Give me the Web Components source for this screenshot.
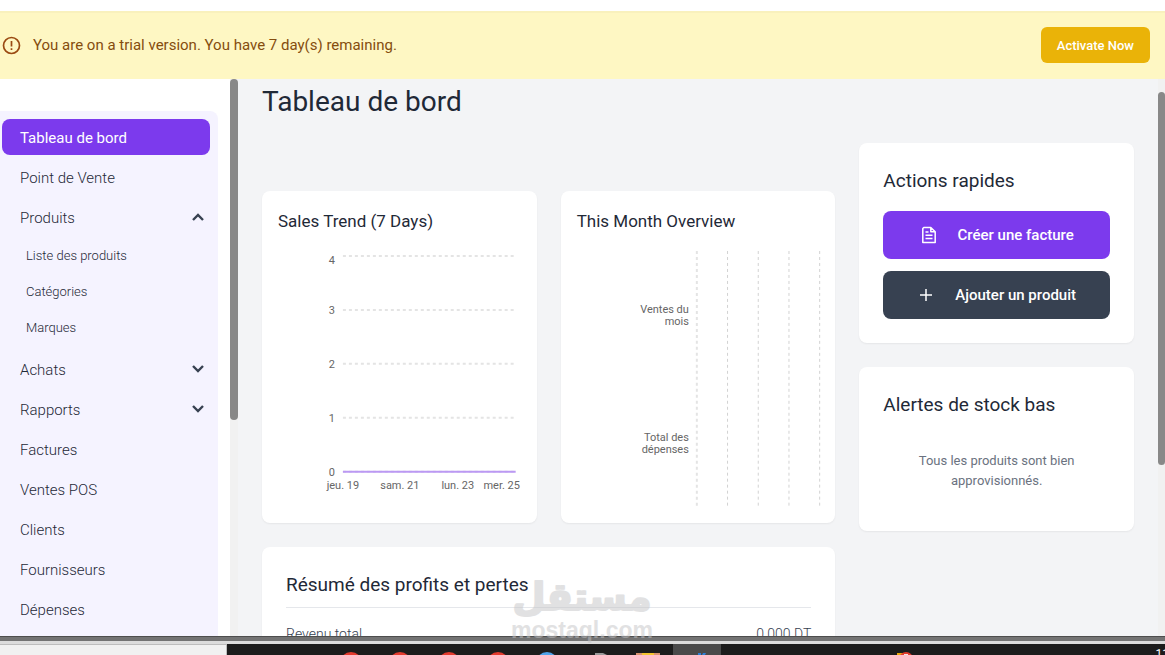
<!DOCTYPE html>
<html lang="fr">
<head>
<meta charset="utf-8">
<title>Tableau de bord</title>
<style>
    html, body {
        height: 100%;
        margin: 0;
    }

    body {
        font-family: Roboto, "Liberation Sans", sans-serif;
        font-size: 15px;
        font-weight: 300;
        line-height: 24px;
        color: #1f2937;
        background-color: white;
        overflow: hidden;
    }
</style>
</head>
<body>
<dashboard-app></dashboard-app>

<script>
class BaseElement extends HTMLElement {

    constructor() {
        super();

        if (!this.shadowRoot) {
            this.attachShadow({mode: 'open'});
        }
    }

    connectedCallback() {
        this.render();
    }
}

class TrialBanner extends BaseElement {

    render() {
        this.shadowRoot.innerHTML = `
        <style>
        :host {
            display: flex;
            align-items: center;
            box-sizing: border-box;
            height: 68px;
            padding: 0 15px 2px 2px;
            gap: 12px;
            background-color: #fef7c3;
            border-top: 2px solid #f9f1bd;
            color: #854d0e;
            font-weight: 400;
        }

        p {
            flex: 1;
            margin: 0;
        }

        svg {
            width: 19px;
            height: 19px;
        }

        button {
            height: 36px;
            padding: 0 16px;
            border: none;
            border-radius: 6px;
            background-color: #eab308;
            color: white;
            font: 500 13px Roboto, sans-serif;
        }
        </style>
        <svg viewBox="0 0 19 19" fill="none" stroke="#9a4a12" stroke-width="1.7" aria-hidden="true">
            <circle cx="9.5" cy="9.5" r="8"/>
            <path d="M9.5 5v5.6M9.5 12.2v1.8"/>
        </svg>
        <p><slot></slot></p>
        <button type="button">Activate Now</button>
        `;
    }
}

class NavItem extends BaseElement {

    get toggle() {
        return this.getAttribute('toggle');
    }

    render() {
        const paths = {open: 'M2 8l5-5 5 5', closed: 'M2 2l5 5 5-5'};
        const chevron = this.toggle ? `
            <svg viewBox="0 0 14 11" aria-hidden="true">
                <path d="${paths[this.toggle]}" fill="none" stroke="#374151" stroke-width="2.4"/>
            </svg>` : '';
        const inner = `<span><slot></slot></span>${chevron}`;

        this.shadowRoot.innerHTML = `
        <style>
        :host {
            display: block;
        }

        a, button {
            display: flex;
            align-items: center;
            justify-content: space-between;
            box-sizing: border-box;
            width: 100%;
            height: 36px;
            padding: 1px 5px 0 18px;
            border: none;
            border-radius: 8px;
            background: none;
            color: #1f2937;
            font: inherit;
            text-align: left;
            text-decoration: none;
        }

        :host([sub]) a {
            padding-left: 24px;
            font-size: 13px;
        }

        :host([active]) a {
            background-color: #7c3aed;
            color: white;
            font-weight: 400;
        }

        svg {
            width: 14px;
            height: 11px;
        }
        </style>
        ${this.toggle
            ? `<button type="button" aria-expanded="${this.toggle === 'open'}">${inner}</button>`
            : `<a href="#">${inner}</a>`}
        `;
    }
}

class SideNav extends BaseElement {

    render() {
        this.shadowRoot.innerHTML = `
        <style>
        :host {
            display: block;
            width: 230px;
            flex: none;
            overflow: hidden;
            background-color: white;
        }

        nav {
            display: flex;
            flex-direction: column;
            gap: 4px;
            margin: 32px 12px 0 0;
            padding: 8px 8px 40px 2px;
            border-top-right-radius: 8px;
            background-color: #f5f3ff;
        }

        .sub {
            margin: -2px 0 2px;
        }
        </style>
        <nav>
            <nav-item active>Tableau de bord</nav-item>
            <nav-item>Point de Vente</nav-item>
            <nav-item toggle="open">Produits</nav-item>
            <div class="sub">
                <nav-item sub>Liste des produits</nav-item>
                <nav-item sub>Catégories</nav-item>
                <nav-item sub>Marques</nav-item>
            </div>
            <nav-item toggle="closed">Achats</nav-item>
            <nav-item toggle="closed">Rapports</nav-item>
            <nav-item>Factures</nav-item>
            <nav-item>Ventes POS</nav-item>
            <nav-item>Clients</nav-item>
            <nav-item>Fournisseurs</nav-item>
            <nav-item>Dépenses</nav-item>
        </nav>
        `;
    }
}

class ScrollRail extends BaseElement {

    render() {
        this.shadowRoot.innerHTML = `
        <style>
        :host {
            display: flex;
            flex-direction: column;
            flex: none;
            width: 8px;
            background-color: #f1f1f1;
        }

        div {
            height: ${this.getAttribute('size')};
            border-radius: 4px;
            background-color: #888;
        }
        </style>
        <div></div>
        `;
    }
}

class DashCard extends BaseElement {

    render() {
        this.shadowRoot.innerHTML = `
        <style>
        :host {
            display: block;
            padding: 24px;
            border-radius: 8px;
            background-color: white;
            box-shadow: 0 1px 2px rgba(0, 0, 0, 0.06);
        }

        :host([compact]) {
            padding: 16px;
        }

        h2 {
            margin: 0 0 16px;
            font-size: 19px;
            font-weight: 400;
            line-height: 28px;
            color: #1f2937;
        }

        :host([compact]) h2 {
            font-size: 17px;
        }

        :host([ruled]) h2 {
            padding-bottom: 8px;
            border-bottom: 1px solid #e5e7eb;
        }
        </style>
        <h2>${this.getAttribute('heading')}</h2>
        <slot></slot>
        `;
    }
}

const chartStyle = `
    :host {
        display: block;
    }

    svg {
        display: block;
        width: 100%;
        overflow: visible;
    }

    text {
        font-size: 11px;
        font-weight: 400;
        fill: #666;
    }

    .grid {
        stroke: #d2d2d2;
        stroke-dasharray: 3 3;
    }

    .thick {
        stroke: #e4e4e4;
        stroke-width: 2;
    }
`;

class SalesTrendChart extends BaseElement {

    render() {
        const ticks = [4, 3, 2, 1, 0].map((value, i) => {
            const y = 5 + i * 54;
            return `<line class="grid thick" x1="65" x2="238" y1="${y}" y2="${y}"/>
                <text x="57" y="${i === 0 ? 13 : y + 4}" text-anchor="end">${value}</text>`;
        });
        const days = [[65, 'jeu. 19'], [122, 'sam. 21'], [180, 'lun. 23'], [224, 'mer. 25']]
            .map(([x, day]) => `<text x="${x}" y="238" text-anchor="middle">${day}</text>`);

        this.shadowRoot.innerHTML = `
        <style>${chartStyle}</style>
        <svg viewBox="0 0 243 256" role="img" aria-label="Sales Trend">
            ${ticks.join('')}
            ${days.join('')}
            <line x1="65" x2="238" y1="221" y2="221" stroke="#bb99f3" stroke-width="2"/>
        </svg>
        `;
    }
}

class MonthChart extends BaseElement {

    render() {
        const lines = [120, 150.75, 181.5, 212.25, 243]
            .map((x, i) => `<line class="grid ${i === 0 ? 'thick' : ''}" x1="${x}" x2="${x}" y1="0" y2="256"/>`);

        this.shadowRoot.innerHTML = `
        <style>${chartStyle}</style>
        <svg viewBox="0 0 243 256" role="img" aria-label="This Month Overview">
            ${lines.join('')}
            <g text-anchor="end">
                <text x="112" y="62">Ventes du</text>
                <text x="112" y="74">mois</text>
                <text x="112" y="190">Total des</text>
                <text x="112" y="202">dépenses</text>
            </g>
        </svg>
        `;
    }
}

class ActionButton extends BaseElement {

    render() {
        const icons = {
            invoice: '<path d="M3.8 1.5h7l4.4 4.2v10.8H2.8V2.5zM10.8 1.8v4h4.2M5.5 6h3M5.5 9.2h7M5.5 12.6h7"/>',
            plus: '<path d="M9 3v12M3 9h12"/>'
        };

        this.shadowRoot.innerHTML = `
        <style>
        :host {
            display: block;
        }

        button {
            display: flex;
            align-items: center;
            justify-content: center;
            gap: 20px;
            width: 100%;
            height: 48px;
            border: none;
            border-radius: 8px;
            background-color: #7c3aed;
            color: white;
            font: 500 15px Roboto, sans-serif;
        }

        :host([dark]) button {
            background-color: #374151;
        }

        svg {
            width: 18px;
            height: 18px;
            fill: none;
            stroke: white;
            stroke-width: 1.5;
            stroke-linejoin: round;
        }
        </style>
        <button type="button">
            <svg viewBox="0 0 18 18" aria-hidden="true">${icons[this.getAttribute('icon')]}</svg>
            <span><slot></slot></span>
        </button>
        `;
    }
}

class SummaryRow extends BaseElement {

    render() {
        this.shadowRoot.innerHTML = `
        <style>
        :host {
            display: flex;
            justify-content: space-between;
            font-size: 14px;
            line-height: 20px;
            color: #374151;
        }
        </style>
        <span>${this.getAttribute('label')}</span>
        <span><slot></slot></span>
        `;
    }
}

class SiteMark extends BaseElement {

    render() {
        this.shadowRoot.innerHTML = `
        <style>
        :host {
            display: block;
            width: 140px;
            color: #c4c4c6;
            opacity: 0.5;
            pointer-events: none;
        }

        svg {
            display: block;
            overflow: visible;
            fill: currentColor;
        }

        .arabic {
            font: 700 38px "DejaVu Sans", sans-serif;
            stroke: currentColor;
            stroke-width: 2;
            stroke-linejoin: round;
        }

        .latin {
            font: 700 23px "Liberation Sans", sans-serif;
        }
        </style>
        <svg viewBox="0 0 140 66" aria-hidden="true">
            <text class="arabic" x="70" y="32" text-anchor="middle">مستقل</text>
            <text class="latin" x="70" y="60" text-anchor="middle">mostaql.com</text>
        </svg>
        `;
    }
}

class DashboardPage extends BaseElement {

    render() {
        this.shadowRoot.innerHTML = `
        <style>
        :host {
            display: block;
            flex: 1;
            min-width: 0;
            overflow: hidden;
            padding: 0 24px;
            background-color: #f3f4f6;
        }

        h1 {
            margin: 5px 0 23px;
            font-size: 28px;
            font-weight: 400;
            line-height: 36px;
            color: #1f2937;
        }

        .columns {
            display: grid;
            grid-template-columns: repeat(3, minmax(0, 1fr));
            gap: 24px;
            align-items: start;
        }

        .left {
            grid-column: span 2;
            display: grid;
            grid-template-columns: repeat(2, minmax(0, 1fr));
            gap: 24px;
            padding-top: 48px;
        }

        .wide {
            grid-column: span 2;
        }

        .right, .actions {
            display: flex;
            flex-direction: column;
            gap: 24px;
        }

        .actions {
            gap: 12px;
        }

        .empty {
            margin: 0;
            padding: 16px;
            font-size: 13px;
            font-weight: 400;
            line-height: 20px;
            text-align: center;
            color: #6b7280;
        }
        </style>
        <h1>Tableau de bord</h1>
        <div class="columns">
            <div class="left">
                <dash-card compact heading="Sales Trend (7 Days)">
                    <sales-trend-chart></sales-trend-chart>
                </dash-card>
                <dash-card compact heading="This Month Overview">
                    <month-chart></month-chart>
                </dash-card>
                <dash-card class="wide" ruled heading="Résumé des profits et pertes">
                    <summary-row label="Revenu total">0.000 DT</summary-row>
                </dash-card>
            </div>
            <div class="right">
                <dash-card heading="Actions rapides">
                    <div class="actions">
                        <action-button icon="invoice">Créer une facture</action-button>
                        <action-button icon="plus" dark>Ajouter un produit</action-button>
                    </div>
                </dash-card>
                <dash-card heading="Alertes de stock bas">
                    <p class="empty">Tous les produits sont bien approvisionnés.</p>
                </dash-card>
            </div>
        </div>
        `;
    }
}

class TaskBar extends BaseElement {

    render() {
        this.shadowRoot.innerHTML = `
        <style>
        :host {
            display: block;
            flex: none;
        }

        .edge {
            height: 4px;
            border-top: 1px solid #4d4d4d;
            border-bottom: 3px solid #dcdcdc;
            background-color: #737373;
        }

        .bar {
            display: flex;
            height: 11px;
            overflow: hidden;
        }

        .search {
            flex: none;
            box-sizing: border-box;
            width: 227px;
            border-top: 1px solid #bdbdbd;
            border-right: 1px solid #bdbdbd;
            background-color: #f1f1f1;
        }

        .apps {
            flex: 1;
            display: flex;
            justify-content: space-between;
            background-color: #1c1c1c;
            color: white;
        }

        svg {
            flex: none;
            width: 700px;
            height: 11px;
        }

        time {
            margin-right: -4px;
            font-size: 12px;
            font-weight: 400;
            line-height: 20px;
        }
        </style>
        <div class="edge"></div>
        <div class="bar">
            <div class="search"></div>
            <div class="apps">
                <svg viewBox="0 0 700 11" aria-hidden="true">
                    <g fill="#e33b2e">
                        <circle cx="124" cy="19" r="11"/>
                        <circle cx="173" cy="19" r="11"/>
                        <circle cx="222" cy="19" r="11"/>
                        <circle cx="271" cy="19" r="11"/>
                    </g>
                    <circle cx="320" cy="19" r="11" fill="#4fa3ea"/>
                    <path d="M368 9h8l4 2h-12z" fill="#9a9a9a"/>
                    <path d="M409 9h24v2h-24z" fill="#d8936f"/>
                    <path d="M415 9h12v2h-12z" fill="#f4c430"/>
                    <path d="M446 0h48v11h-48z" fill="#4a4a4a"/>
                    <path d="M471 9h3v2h-3zM476 9h3l-1 2h-3z" fill="#2f80d8"/>
                    <path d="M670 9h7v2h-7z" fill="#e8a70c"/>
                    <circle cx="679" cy="15" r="7" fill="#e33b2e"/>
                    <path d="M677 10h4v1h-4z" fill="#f3e3e0"/>
                </svg>
                <time>11</time>
            </div>
        </div>
        `;
    }
}

class DashboardApp extends BaseElement {

    render() {
        this.shadowRoot.innerHTML = `
        <style>
        :host {
            display: flex;
            flex-direction: column;
            height: 100vh;
            padding-top: 11px;
            box-sizing: border-box;
            overflow: hidden;
        }

        .body {
            position: relative;
            flex: 1;
            display: flex;
            min-height: 0;
        }

        .page-rail {
            width: 7px;
            padding-top: 13px;
        }

        /* translucent mark over the bottom of the page */
        site-mark {
            position: absolute;
            left: 512px;
            bottom: -8px;
        }
        </style>
        <trial-banner>You are on a trial version. You have 7 day(s) remaining.</trial-banner>
        <div class="body">
            <side-nav></side-nav>
            <scroll-rail size="341px"></scroll-rail>
            <dashboard-page></dashboard-page>
            <scroll-rail class="page-rail" size="373px"></scroll-rail>
            <site-mark></site-mark>
        </div>
        <task-bar></task-bar>
        `;
    }
}

window.customElements.define('trial-banner', TrialBanner);
window.customElements.define('nav-item', NavItem);
window.customElements.define('side-nav', SideNav);
window.customElements.define('scroll-rail', ScrollRail);
window.customElements.define('dash-card', DashCard);
window.customElements.define('sales-trend-chart', SalesTrendChart);
window.customElements.define('month-chart', MonthChart);
window.customElements.define('action-button', ActionButton);
window.customElements.define('summary-row', SummaryRow);
window.customElements.define('site-mark', SiteMark);
window.customElements.define('dashboard-page', DashboardPage);
window.customElements.define('task-bar', TaskBar);
window.customElements.define('dashboard-app', DashboardApp);
</script>
</body>
</html>
